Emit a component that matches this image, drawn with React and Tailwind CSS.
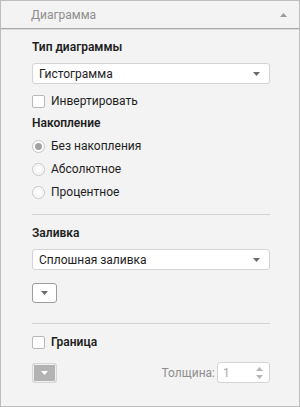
import React, { useState } from 'react'

const font = { fontFamily: 'Roboto, "Liberation Sans", sans-serif' }

function Caret({ className = 'text-[#6b6b6b]', up = false }) {
  return (
    <svg width="7" height="4" viewBox="0 0 7 4" className={className}>
      {up ? <path d="M0 4 L3.5 0 L7 4 Z" fill="currentColor" /> : <path d="M0 0 L7 0 L3.5 4 Z" fill="currentColor" />}
    </svg>
  )
}

function Select({ value }) {
  return (
    <div className="flex h-[21px] items-center justify-between rounded-[3px] border border-[#d4d4d4] bg-white pl-[6px] pr-[9px] text-[12px] text-[#1e1e1e]">
      <span>{value}</span>
      <Caret />
    </div>
  )
}

function Checkbox({ label, bold }) {
  return (
    <div className="flex h-4 items-center">
      <div className="h-[13px] w-[13px] rounded-[2px] border border-[#b9b9b9] bg-white" />
      <span className={`ml-[6px] text-[12px] text-[#1e1e1e] ${bold ? 'font-semibold' : ''}`}>{label}</span>
    </div>
  )
}

function Radio({ label, checked }) {
  return (
    <div className="flex h-4 items-center">
      <div className="flex h-[13px] w-[13px] items-center justify-center rounded-full border border-[#c4c4c4] bg-white">
        {checked ? (
          <div className="h-[7px] w-[7px] rounded-full bg-[#a3a3a3]" />
        ) : (
          <div className="h-[9px] w-[9px] rounded-full border border-[#ececec]" />
        )}
      </div>
      <span className="ml-[6px] text-[12px] text-[#1e1e1e]">{label}</span>
    </div>
  )
}

export default function App() {
  const [mode] = useState('none')

  return (
    <div style={font} className="h-[407px] w-[300px] border border-[#bdbdbd] bg-[#f3f3f3]">
      {/* header */}
      <div className="flex h-[28px] items-center justify-between border-b border-[#a8a8a8] bg-[#f3f3f3] pl-[30px] pr-[12px] shadow-[0_1px_0_#dcdcdc]">
        <span className="text-[12px] text-[#8e8e8e]">Диаграмма</span>
        <Caret up className="text-[#9a9a9a]" />
      </div>

      <div className="pl-[31px] pr-[29px]">
        <div className="mt-[10px] h-4 text-[12px] font-semibold leading-4 text-[#1e1e1e]">Тип диаграммы</div>
        <div className="mt-[8px]">
          <Select value="Гистограмма" />
        </div>
        <div className="mt-[9px]">
          <Checkbox label="Инвертировать" />
        </div>

        <div className="mt-[6px] h-4 text-[12px] font-semibold leading-4 text-[#1e1e1e]">Накопление</div>
        <div className="mt-[7px] flex flex-col gap-[7px]">
          <Radio label="Без накопления" checked={mode === 'none'} />
          <Radio label="Абсолютное" checked={mode === 'abs'} />
          <Radio label="Процентное" checked={mode === 'pct'} />
        </div>

        <div className="mt-[14px] h-px bg-[#d2d2d2]" />

        <div className="mt-[10px] h-4 text-[12px] font-semibold leading-4 text-[#1e1e1e]">Заливка</div>
        <div className="mt-[8px]">
          <Select value="Сплошная заливка" />
        </div>
        <button className="mt-[13px] flex h-[20px] w-[25px] items-center justify-center rounded-[3px] border border-[#9c9c9c] bg-white">
          <Caret />
        </button>

        <div className="mt-[20px] h-px bg-[#d2d2d2]" />

        <div className="mt-[10px]">
          <Checkbox label="Граница" bold />
        </div>

        <div className="mt-[12px] flex items-center justify-between">
          <button className="flex h-[20px] w-[25px] items-center justify-center rounded-[3px] border border-[#d6d6d6] bg-[#b3b3b3] shadow-[inset_0_0_0_1px_#f0f0f0]">
            <Caret className="text-white" />
          </button>
          <div className="flex items-center">
            <span className="text-[12px] text-[#8e8e8e]">Толщина:</span>
            <div className="ml-[2px] flex h-[21px] w-[53px] items-center justify-between rounded-[3px] border border-[#d4d4d4] bg-white pl-[5px] pr-[6px]">
              <span className="text-[12px] text-[#a8a8a8]">1</span>
              <div className="flex flex-col gap-[4px]">
                <Caret up className="text-[#b5b5b5]" />
                <Caret className="text-[#b5b5b5]" />
              </div>
            </div>
          </div>
        </div>
      </div>
    </div>
  )
}
